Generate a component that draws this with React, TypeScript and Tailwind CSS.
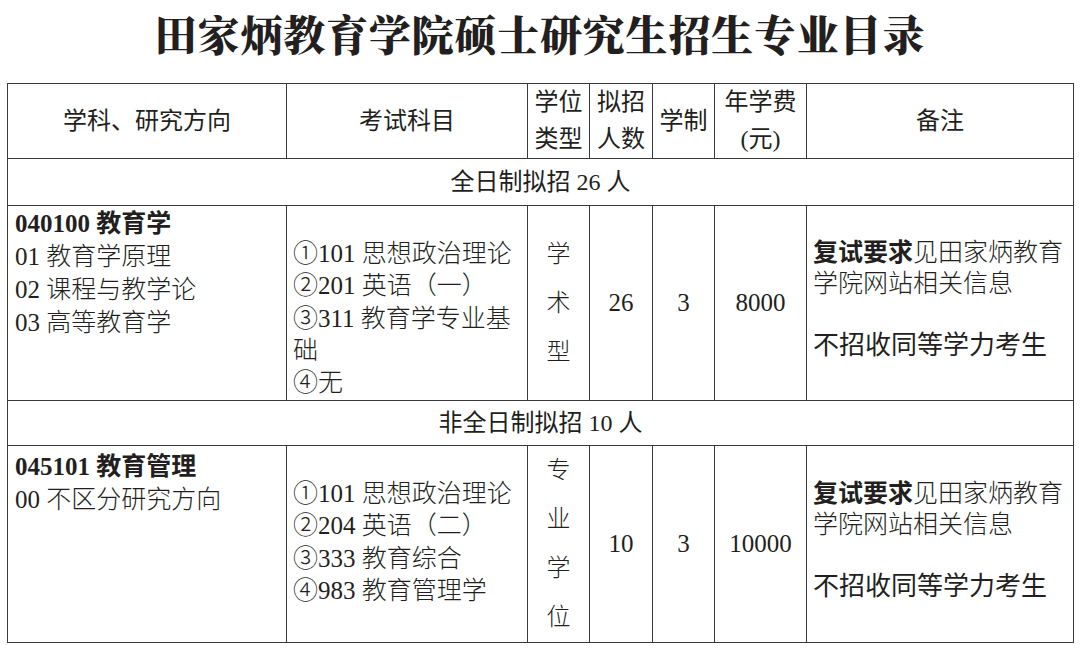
import React from 'react';

const mix = "font-['Liberation_Serif','Noto_Sans_CJK_SC',sans-serif]";
const cell = 'border-[1.5px] border-[#3a3a3a]';

const Vertical = ({ chars }: { chars: string[] }) => (
  <div className="flex flex-col items-center leading-[49px]">
    {chars.map((c) => (
      <span key={c}>{c}</span>
    ))}
  </div>
);

const Remark = () => (
  <div className="pl-[6px] pb-[8px] leading-[31px]">
    <div>
      <span className="font-bold">复试要求</span>
      <span className="font-light">见田家炳教育</span>
    </div>
    <div className="font-light">学院网站相关信息</div>
    <div className="mt-[31px] text-[26px] font-normal">不招收同等学力考生</div>
  </div>
);

export default function App() {
  return (
    <div className={`w-[1080px] h-[655px] bg-white text-[#231f20] ${mix} overflow-hidden`}>
      <h1 className="pt-[8px] h-[83px] text-center text-[42px] leading-[50px] font-black tracking-[0.8px] font-['Noto_Serif_CJK_SC','Noto_Sans_CJK_SC',serif]">
        田家炳教育学院硕士研究生招生专业目录
      </h1>

      <table className="ml-[7px] w-[1066px] table-fixed border-collapse text-[24px]">
        <colgroup>
          <col className="w-[279px]" />
          <col className="w-[241px]" />
          <col className="w-[62px]" />
          <col className="w-[63px]" />
          <col className="w-[62px]" />
          <col className="w-[92px]" />
          <col className="w-[267px]" />
        </colgroup>
        <tbody>
          {/* header */}
          <tr className="h-[75px] text-center">
            <td className={cell}>学科、研究方向</td>
            <td className={cell}>考试科目</td>
            <td className={`${cell} leading-[37px]`}>学位<br />类型</td>
            <td className={`${cell} leading-[37px]`}>拟招<br />人数</td>
            <td className={cell}>学制</td>
            <td className={`${cell} leading-[37px]`}>年学费<br />(元)</td>
            <td className={cell}>备注</td>
          </tr>

          <tr className="h-[47px]">
            <td colSpan={7} className={`${cell} text-center`}>全日制拟招 26 人</td>
          </tr>

          {/* 全日制 */}
          <tr className="h-[195px]">
            <td className={`${cell} align-top pl-[7px] pt-[1px] leading-[33px] text-[25px]`}>
              <div className="font-bold">040100 教育学</div>
              <div className="font-light">01 教育学原理</div>
              <div className="font-light">02 课程与教学论</div>
              <div className="font-light">03 高等教育学</div>
            </td>
            <td className={`${cell} align-top pl-[6px] pt-[32px] leading-[32.3px] text-[25px] font-light`}>
              <div>①101 思想政治理论</div>
              <div>②201 英语（一）</div>
              <div>③311 教育学专业基</div>
              <div>础</div>
              <div>④无</div>
            </td>
            <td className={`${cell} font-light`}>
              <Vertical chars={['学', '术', '型']} />
            </td>
            <td className={`${cell} text-center text-[25px]`}>26</td>
            <td className={`${cell} text-center text-[25px]`}>3</td>
            <td className={`${cell} text-center text-[25px]`}>8000</td>
            <td className={`${cell} text-[25px]`}>
              <Remark />
            </td>
          </tr>

          <tr className="h-[45px]">
            <td colSpan={7} className={`${cell} text-center`}>非全日制拟招 10 人</td>
          </tr>

          {/* 非全日制 */}
          <tr className="h-[196px]">
            <td className={`${cell} align-top pl-[7px] pt-[4px] leading-[33px] text-[25px]`}>
              <div className="font-bold">045101 教育管理</div>
              <div className="font-light">00 不区分研究方向</div>
            </td>
            <td className={`${cell} align-top pl-[6px] pt-[32px] leading-[32.3px] text-[25px] font-light`}>
              <div>①101 思想政治理论</div>
              <div>②204 英语（二）</div>
              <div>③333 教育综合</div>
              <div>④983 教育管理学</div>
            </td>
            <td className={`${cell} font-light`}>
              <Vertical chars={['专', '业', '学', '位']} />
            </td>
            <td className={`${cell} text-center text-[25px]`}>10</td>
            <td className={`${cell} text-center text-[25px]`}>3</td>
            <td className={`${cell} text-center text-[25px]`}>10000</td>
            <td className={`${cell} text-[25px]`}>
              <Remark />
            </td>
          </tr>
        </tbody>
      </table>
    </div>
  );
}
